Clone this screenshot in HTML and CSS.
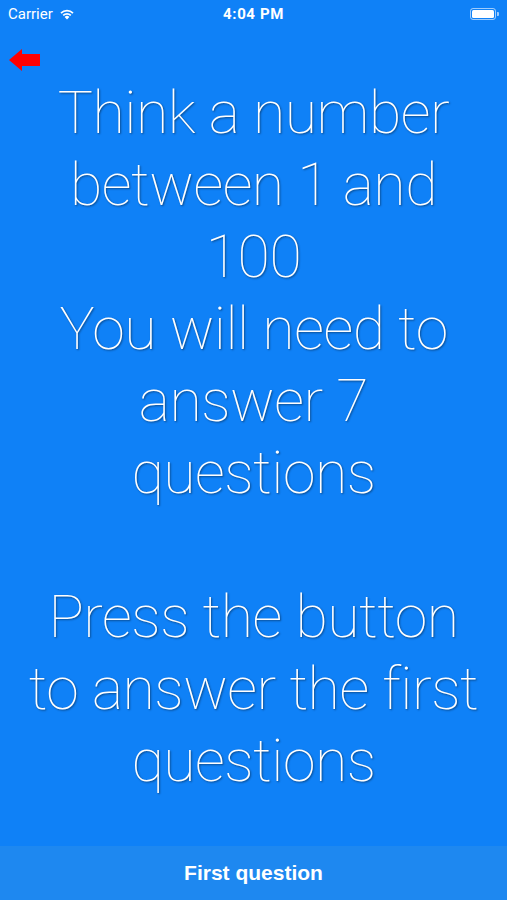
FILE: index.html
```html
<html>
<head>
	<link rel="stylesheet" href="styles.css">
</head>
<body>

	<header class="status">
		<div class="carrier">
			Carrier
			<svg class="wifi" width="16" height="12" viewBox="0 0 16 12">
				<path d="M8 11.5 L5.6 8.9 A3.4 3.4 0 0 1 10.4 8.9 Z" fill="#fff"/>
				<path d="M3.6 6.8 A6.3 6.3 0 0 1 12.4 6.8 L11.2 8.1 A4.6 4.6 0 0 0 4.8 8.1 Z" fill="#fff"/>
				<path d="M1.4 4.5 A9.4 9.4 0 0 1 14.6 4.5 L13.4 5.8 A7.7 7.7 0 0 0 2.6 5.8 Z" fill="#fff"/>
			</svg>
		</div>
		<div class="time">4:04 PM</div>
		<div class="battery">
			<div class="battery-body"><div class="battery-fill"></div></div>
			<div class="battery-tip"></div>
		</div>
	</header>

	<nav class="topbar">
		<a class="back" href="#">
			<svg width="32" height="24" viewBox="0 0 32 24">
				<path d="M0 12 L13 1 L13 6 L31 6 L31 18 L13 18 L13 23 Z" fill="#ff0000"/>
			</svg>
		</a>
	</nav>

	<main class="intro">
		<p>Think a number<br>between 1 and<br>100<br>You will need to<br>answer 7<br>questions<br><br>Press the button<br>to answer the first<br>questions</p>
	</main>

	<footer>
		<button class="next">First question</button>
	</footer>

</body>
</html>
```

FILE: styles.css
```css
* {
	margin: 0;
	padding: 0;
	box-sizing: border-box;
}

html, body {
	height: 100%;
}

body {
	background: #0f81f7;
	font-family: "Helvetica Neue", Roboto, "Liberation Sans", sans-serif;
	color: white;
	display: flex;
	flex-direction: column;
	overflow: hidden;
}

.status {
	height: 28px;
	display: flex;
	align-items: center;
	justify-content: space-between;
	padding: 0 8px 0 8px;
	font-size: 15px;
}

.carrier {
	flex: 1;
	display: flex;
	align-items: center;
	gap: 6px;
}

.time {
	flex: 1;
	text-align: center;
	font-weight: bold;
	font-size: 15px;
	letter-spacing: 0.6px;
}

.battery {
	flex: 1;
	display: flex;
	justify-content: flex-end;
	align-items: center;
}

.battery-body {
	width: 26px;
	height: 12px;
	border: 1px solid rgba(255, 255, 255, 0.6);
	border-radius: 3px;
	padding: 1px;
}

.battery-fill {
	width: 100%;
	height: 100%;
	background: white;
	border-radius: 1.5px;
}

.battery-tip {
	width: 2px;
	height: 4px;
	background: rgba(255, 255, 255, 0.6);
	border-radius: 0 1px 1px 0;
	margin-left: 1px;
}

.topbar {
	height: 24px;
	margin-top: 20px;
	padding-left: 9px;
	display: flex;
	align-items: center;
}

.back {
	display: flex;
}

.intro {
	flex: 1;
	padding-top: 5px;
}

.intro p {
	text-align: center;
	font-weight: 100;
	font-size: 59px;
	line-height: 72px;
	letter-spacing: -0.5px;
	text-shadow: 1px 1px 2px rgba(0, 0, 0, 0.45);
}

footer {
	height: 54px;
	background: #1e88f0;
}

.next {
	width: 100%;
	height: 100%;
	border: none;
	background: none;
	color: white;
	font-family: "Helvetica Neue", "Liberation Sans", sans-serif;
	font-weight: bold;
	font-size: 21px;
}
```
